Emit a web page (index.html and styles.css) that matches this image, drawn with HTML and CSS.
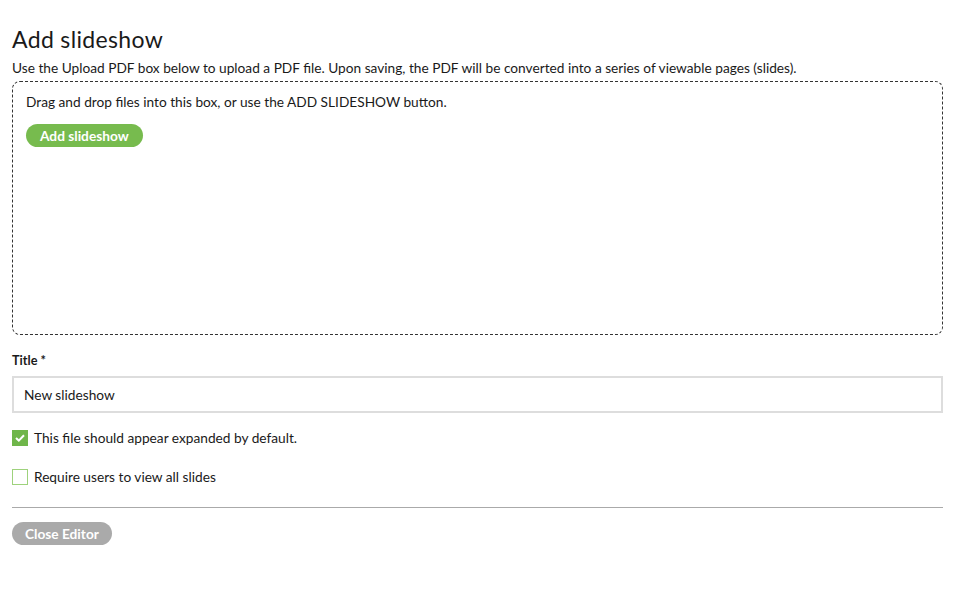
FILE: index.html
```html
<!DOCTYPE html>
<html>
<head>
<meta charset="utf-8">
<link rel="stylesheet" href="styles.css">
</head>
<body>
<div class="page">
  <h1 class="title">Add slideshow</h1>
  <p class="desc">Use the Upload PDF box below to upload a PDF file. Upon saving, the PDF will be converted into a series of viewable pages (slides).</p>
  <div class="dropzone">
    <p class="drop-text">Drag and drop files into this box, or use the ADD SLIDESHOW button.</p>
    <button class="btn btn-green">Add slideshow</button>
  </div>
  <label class="field-label">Title<span class="req">*</span></label>
  <div class="input">New slideshow</div>
  <div class="check-row">
    <span class="box checked"><svg width="10" height="8" viewBox="0 0 10 8"><path d="M1 4 L3.8 6.6 L9 1.2" fill="none" stroke="#fff" stroke-width="2"/></svg></span>
    <span class="check-label">This file should appear expanded by default.</span>
  </div>
  <div class="check-row second">
    <span class="box"></span>
    <span class="check-label">Require users to view all slides</span>
  </div>
  <div class="rule"></div>
  <button class="btn btn-gray">Close Editor</button>
</div>
</body>
</html>
```
FILE: styles.css
```css
html, body { margin: 0; padding: 0; background: #fff; }
body { font-family: "Lato", "Noto Sans", sans-serif; color: #1a1a1a; }
.page { padding: 26px 13px 0 12px; }
.title { font-size: 23px; font-weight: 400; margin: 0; line-height: 26px; letter-spacing: 0.35px; }
.desc { font-size: 13.7px; margin: 8px 0 0; line-height: 16px; }
.dropzone {
  margin-top: 5px;
  height: 254px;
  border: 1px dashed #333;
  border-radius: 8px;
  padding: 12px 13px;
  box-sizing: border-box;
}
.drop-text { font-size: 13.7px; margin: 0; line-height: 16px; }
.btn {
  border: none;
  border-radius: 12px;
  height: 23px;
  color: #fff;
  font-family: inherit;
  font-weight: 700;
  font-size: 13.7px;
  padding: 0 14px;
  display: block;
}
.btn-green { background: #77bb4e; margin-top: 14px; }
.field-label { display: block; font-weight: 700; font-size: 12.7px; margin-top: 17px; line-height: 16px; }
.req { margin-left: 3px; }
.input {
  margin-top: 8px;
  height: 37px;
  border: 2px solid #ddd;
  box-sizing: border-box;
  padding: 0 10px;
  display: flex;
  align-items: center;
  font-size: 13.7px;
}
.check-row { display: flex; align-items: center; gap: 6px; margin-top: 16px; font-size: 13.7px; }
.check-row.second { margin-top: 22px; }
.box {
  width: 16px; height: 16px; box-sizing: border-box;
  border: 1.5px solid #9ed27c;
  display: flex; align-items: center; justify-content: center;
}
.box.checked { background: #6fb64a; border-color: #6fb64a; }
.rule { height: 1px; background: #aaa; margin-top: 22px; }
.btn-gray { background: #aaa; margin-top: 14px; padding: 0 13px; }
```
